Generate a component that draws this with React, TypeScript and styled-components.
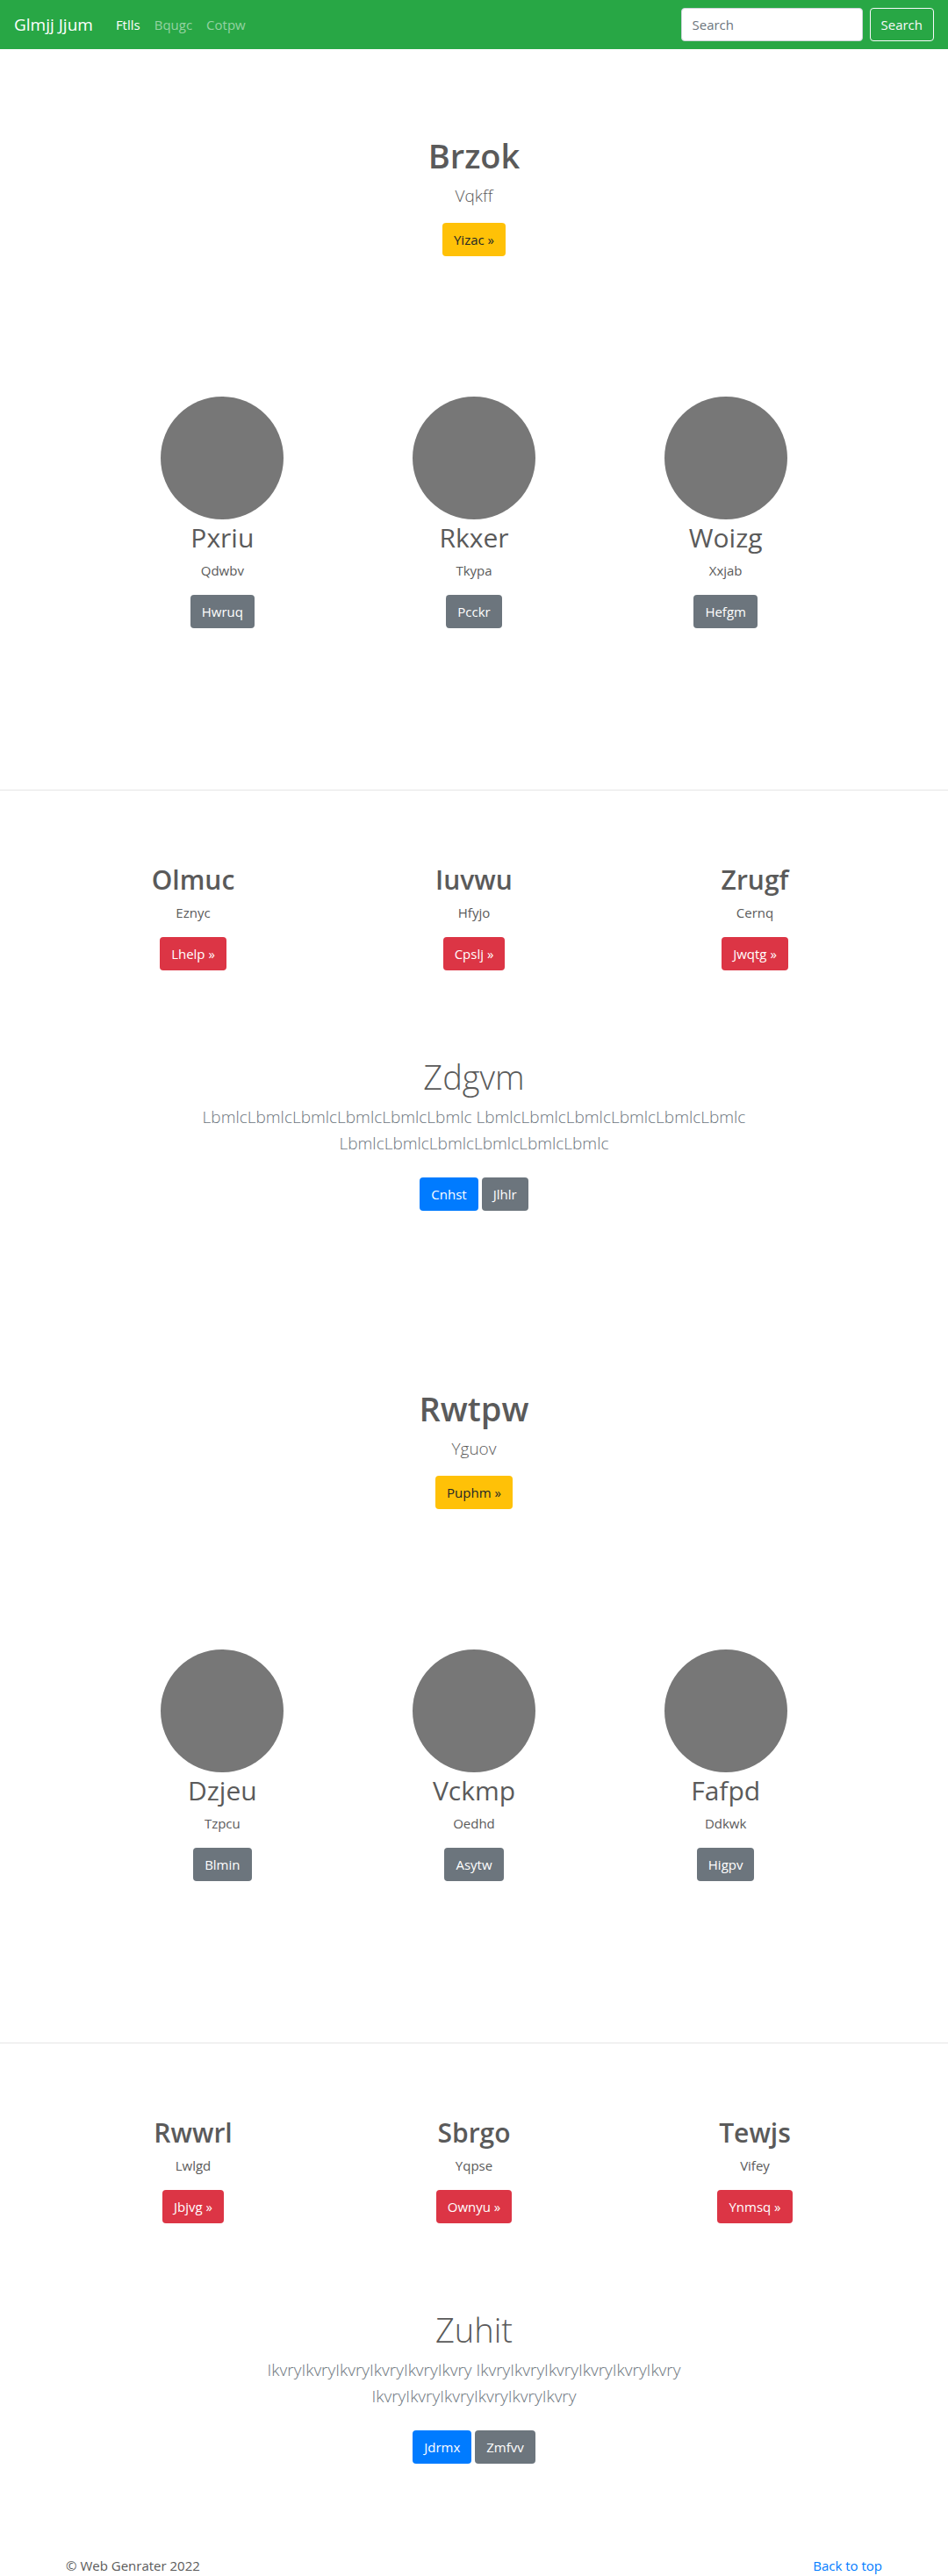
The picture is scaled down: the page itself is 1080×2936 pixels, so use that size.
import React from "react";
import styled, { createGlobalStyle, css } from "styled-components";

type Tone = "warning" | "secondary" | "danger" | "primary";

const tones: Record<Tone, { background: string; color: string }> = {
  warning: { background: "#ffc107", color: "#212529" },
  secondary: { background: "#6c757d", color: "#ffffff" },
  danger: { background: "#dc3545", color: "#ffffff" },
  primary: { background: "#007bff", color: "#ffffff" },
};

const GlobalStyle = createGlobalStyle`
  *, *::before, *::after { box-sizing: border-box; }
  body {
    margin: 0;
    background: #ffffff;
    color: #5a5a5a;
    font-family: "Segoe UI", "Open Sans", "Noto Sans", sans-serif;
    font-size: 15px;
    line-height: 24px;
  }
  h1, h2, p { margin: 0; }
`;

const Navbar = styled.nav`
  display: flex;
  align-items: center;
  min-height: 56px;
  padding: 8px 16px;
  background: #28a745;
`;

const Brand = styled.a`
  margin-right: 18px;
  color: #ffffff;
  font-size: 19px;
  line-height: 30px;
  text-decoration: none;
  white-space: nowrap;
`;

const NavList = styled.ul`
  display: flex;
  flex: 1;
  margin: 0;
  padding: 0;
  list-style: none;
`;

const NavLink = styled.a<{ $active?: boolean }>`
  display: block;
  padding: 8px;
  color: ${(p) => (p.$active ? "#ffffff" : "rgba(255, 255, 255, 0.5)")};
  text-decoration: none;
`;

const SearchForm = styled.form`
  display: flex;
  gap: 8px;
`;

const control = css`
  height: 38px;
  padding: 6px 12px;
  border: 1px solid transparent;
  border-radius: 4px;
  font: inherit;
`;

const SearchInput = styled.input`
  ${control}
  width: 207px;
  min-width: 0;
  border-color: #ced4da;
  background: #ffffff;
  color: #495057;

  &::placeholder {
    color: #6c757d;
    opacity: 1;
  }
`;

const SearchButton = styled.button`
  ${control}
  border-color: #f8f9fa;
  background: transparent;
  color: #f8f9fa;
  cursor: pointer;
`;

const Button = styled.button<{ $tone: Tone }>`
  ${control}
  background: ${(p) => tones[p.$tone].background};
  color: ${(p) => tones[p.$tone].color};
  cursor: pointer;
`;

const Centered = styled.section`
  display: flex;
  flex-direction: column;
  align-items: center;
  max-width: 680px;
  margin: 0 auto;
  padding: 96px 16px 0;
  text-align: center;
`;

const Hero = styled(Centered)`
  padding-bottom: 160px;
`;

const CallToAction = styled(Centered)`
  padding-bottom: 104px;
`;

const PageTitle = styled.h1<{ $light?: boolean }>`
  margin-bottom: 5px;
  font-size: 38px;
  font-weight: ${(p) => (p.$light ? 300 : 600)};
  line-height: 51px;
`;

const Lead = styled.p<{ $muted?: boolean }>`
  margin-bottom: 16px;
  color: ${(p) => (p.$muted ? "#6c757d" : "inherit")};
  font-size: 19px;
  font-weight: 300;
  line-height: 30px;
`;

const Actions = styled.div`
  display: flex;
  gap: 4px;
  margin-top: 8px;
`;

const Columns = styled.section<{ $width: number }>`
  display: grid;
  grid-template-columns: repeat(3, 1fr);
  max-width: ${(p) => p.$width}px;
  margin: 0 auto;
`;

const Column = styled.article`
  display: flex;
  flex-direction: column;
  align-items: center;
  text-align: center;
`;

const Avatar = styled.div`
  width: 140px;
  height: 140px;
  border-radius: 50%;
  background: #777777;
`;

const ColumnTitle = styled.h2<{ $strong?: boolean }>`
  margin-bottom: 5px;
  font-size: 30px;
  font-weight: ${(p) => (p.$strong ? 600 : 400)};
  line-height: 41px;
`;

const ColumnText = styled.p`
  margin-bottom: 16px;
`;

const Divider = styled.hr`
  margin: 184px 0 81px;
  border: 0;
  border-top: 1px solid rgba(0, 0, 0, 0.1);
`;

const Footer = styled.footer`
  display: flex;
  justify-content: space-between;
  max-width: 960px;
  margin: 0 auto;
  padding: 0 15px;
`;

const FooterLink = styled.a`
  color: #007bff;
  text-decoration: none;
`;

type Item = { title: string; text: string; action: string };

type Block = {
  hero: Item;
  people: Item[];
  features: Item[];
  closing: { title: string; text: string; primary: string; secondary: string };
};

const blocks: Block[] = [
  {
    hero: { title: "Brzok", text: "Vqkff", action: "Yizac »" },
    people: [
      { title: "Pxriu", text: "Qdwbv", action: "Hwruq" },
      { title: "Rkxer", text: "Tkypa", action: "Pcckr" },
      { title: "Woizg", text: "Xxjab", action: "Hefgm" },
    ],
    features: [
      { title: "Olmuc", text: "Eznyc", action: "Lhelp »" },
      { title: "Iuvwu", text: "Hfyjo", action: "Cpslj »" },
      { title: "Zrugf", text: "Cernq", action: "Jwqtg »" },
    ],
    closing: {
      title: "Zdgvm",
      text: "LbmlcLbmlcLbmlcLbmlcLbmlcLbmlc LbmlcLbmlcLbmlcLbmlcLbmlcLbmlc LbmlcLbmlcLbmlcLbmlcLbmlcLbmlc",
      primary: "Cnhst",
      secondary: "Jlhlr",
    },
  },
  {
    hero: { title: "Rwtpw", text: "Yguov", action: "Puphm »" },
    people: [
      { title: "Dzjeu", text: "Tzpcu", action: "Blmin" },
      { title: "Vckmp", text: "Oedhd", action: "Asytw" },
      { title: "Fafpd", text: "Ddkwk", action: "Higpv" },
    ],
    features: [
      { title: "Rwwrl", text: "Lwlgd", action: "Jbjvg »" },
      { title: "Sbrgo", text: "Yqpse", action: "Ownyu »" },
      { title: "Tewjs", text: "Vifey", action: "Ynmsq »" },
    ],
    closing: {
      title: "Zuhit",
      text: "IkvryIkvryIkvryIkvryIkvryIkvry IkvryIkvryIkvryIkvryIkvryIkvry IkvryIkvryIkvryIkvryIkvryIkvry",
      primary: "Jdrmx",
      secondary: "Zmfvv",
    },
  },
];

function ContentBlock({ hero, people, features, closing }: Block) {
  return (
    <>
      <Hero>
        <PageTitle>{hero.title}</PageTitle>
        <Lead>{hero.text}</Lead>
        <Button type="button" $tone="warning">{hero.action}</Button>
      </Hero>
      <Columns $width={860}>
        {people.map((item) => (
          <Column key={item.title}>
            <Avatar />
            <ColumnTitle>{item.title}</ColumnTitle>
            <ColumnText>{item.text}</ColumnText>
            <Button type="button" $tone="secondary">{item.action}</Button>
          </Column>
        ))}
      </Columns>
      <Divider />
      <Columns $width={960}>
        {features.map((item) => (
          <Column key={item.title}>
            <ColumnTitle $strong>{item.title}</ColumnTitle>
            <ColumnText>{item.text}</ColumnText>
            <Button type="button" $tone="danger">{item.action}</Button>
          </Column>
        ))}
      </Columns>
      <CallToAction>
        <PageTitle as="h2" $light>{closing.title}</PageTitle>
        <Lead $muted>{closing.text}</Lead>
        <Actions>
          <Button type="button" $tone="primary">{closing.primary}</Button>
          <Button type="button" $tone="secondary">{closing.secondary}</Button>
        </Actions>
      </CallToAction>
    </>
  );
}

export default function App() {
  return (
    <>
      <GlobalStyle />
      <Navbar id="top">
        <Brand href="#top">Glmjj Jjum</Brand>
        <NavList>
          <li><NavLink href="#top" $active>Ftlls</NavLink></li>
          <li><NavLink href="#top">Bqugc</NavLink></li>
          <li><NavLink href="#top">Cotpw</NavLink></li>
        </NavList>
        <SearchForm role="search" onSubmit={(event) => event.preventDefault()}>
          <SearchInput type="search" placeholder="Search" aria-label="Search" />
          <SearchButton type="submit">Search</SearchButton>
        </SearchForm>
      </Navbar>
      <main>
        {blocks.map((block) => (
          <ContentBlock key={block.hero.title} {...block} />
        ))}
      </main>
      <Footer>
        <p>© Web Genrater 2022</p>
        <FooterLink href="#top">Back to top</FooterLink>
      </Footer>
    </>
  );
}
